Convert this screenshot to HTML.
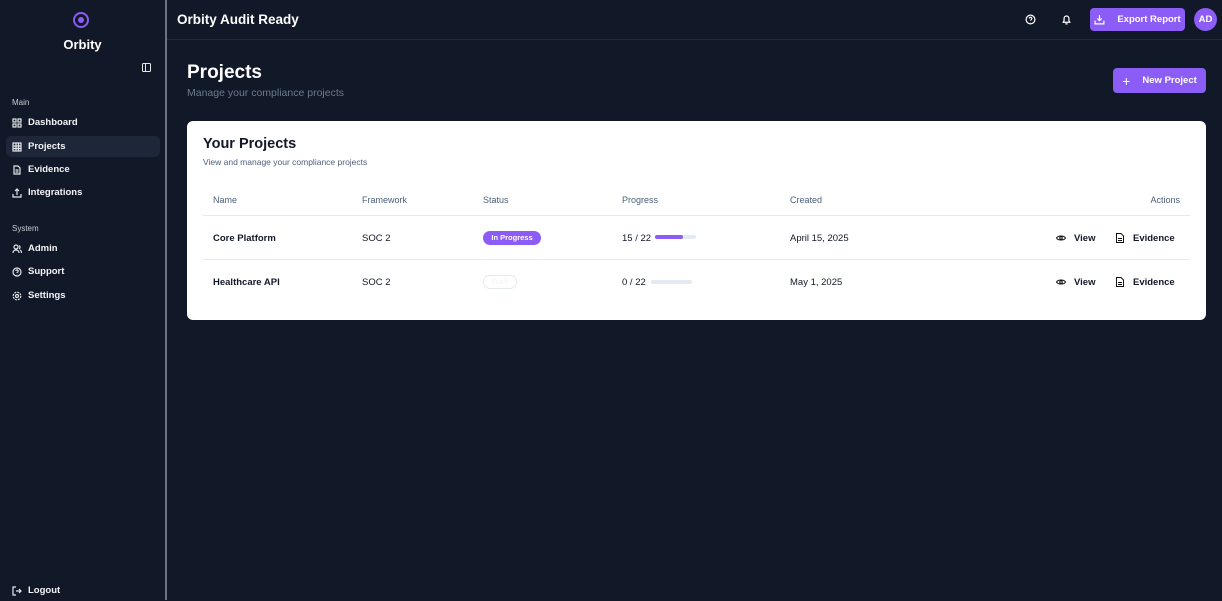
<!DOCTYPE html>
<html><head><meta charset="utf-8"><style>
*{box-sizing:border-box;margin:0;padding:0}
body{width:1222px;height:600px;background:#111827;font-family:"Liberation Sans",sans-serif;color:#fff;position:relative;overflow:hidden}
.side{position:absolute;left:0;top:0;width:167px;height:600px;background:#111827;border-right:2px solid #6b7280}
.logo{position:absolute;left:73px;top:12px;width:16px;height:16px;border:2px solid #8b5cf6;border-radius:50%}
.logo:after{content:"";position:absolute;left:3px;top:3px;width:6px;height:6px;background:#8b5cf6;border-radius:50%}
.brand{position:absolute;top:37px;width:165px;text-align:center;font-weight:bold;font-size:13px}
.sec{position:absolute;left:12px;font-size:8px;color:#c8ccd4}
.item{position:absolute;left:6px;width:154px;height:21px;border-radius:5px;display:flex;align-items:center;padding-left:6px;font-size:9.5px;font-weight:bold;color:#f3f4f6}
.item svg{width:10px;height:10px;margin-right:6px;fill:none;stroke:#e5e7eb;stroke-width:1.2}
.top{position:absolute;left:167px;top:0;right:0;height:40px;border-bottom:1px solid #1f2a37}
.title{position:absolute;left:177px;top:12px;font-size:13.5px;font-weight:bold}
.btn{position:absolute;background:#8b5cf6;border-radius:4px;color:#fff;font-size:9.5px;font-weight:bold;display:flex;align-items:center;justify-content:center}
.card{position:absolute;left:187px;top:121px;width:1019px;height:199px;background:#fff;border-radius:6px;color:#111827}
.th{position:absolute;top:74px;font-size:9px;color:#4b5f7a}
.td{position:absolute;font-size:9.5px;font-weight:bold;color:#111827;display:flex;align-items:center;height:12px}
.line{position:absolute;left:16px;right:16px;height:1px;background:#e5eaf0}
</style></head><body>
<div class="side">
<div class="logo"></div>
<div class="brand">Orbity</div>
<svg style="position:absolute;left:142px;top:63px" width="9" height="9" viewBox="0 0 9 9"><rect x=".5" y=".5" width="8" height="8" rx="1" fill="none" stroke="#e5e7eb"/><line x1="3.5" y1="1" x2="3.5" y2="8" stroke="#e5e7eb"/></svg>
<div class="sec" style="top:98px">Main</div>
<div class="item" style="top:112px"><svg viewBox="0 0 10 10"><rect x="1" y="1" width="3" height="3"/><rect x="6" y="1" width="3" height="3"/><rect x="1" y="6" width="3" height="3"/><rect x="6" y="6" width="3" height="3"/></svg>Dashboard</div>
<div class="item" style="top:136px;background:#1d2739"><svg viewBox="0 0 10 10"><rect x="1" y="1" width="8" height="8"/><path d="M1 4h8M1 6.5h8M4 1v8M6.5 1v8"/></svg>Projects</div>
<div class="item" style="top:159px"><svg viewBox="0 0 10 10"><path d="M2 1h4l2 2v6H2z M3.5 5h3M3.5 7h3"/></svg>Evidence</div>
<div class="item" style="top:182px"><svg viewBox="0 0 10 10"><path d="M1 6v3h8V6M5 7V1M3 3l2-2 2 2"/></svg>Integrations</div>
<div class="sec" style="top:224px">System</div>
<div class="item" style="top:238px"><svg viewBox="0 0 10 10"><circle cx="4" cy="3" r="2"/><path d="M1 9c0-2 1.5-3 3-3s3 1 3 3M7 1.5a2 2 0 010 3.5M8 6c1 .5 1.5 1.5 1.5 3"/></svg>Admin</div>
<div class="item" style="top:261px"><svg viewBox="0 0 10 10"><circle cx="5" cy="5" r="4"/><path d="M3.8 4a1.2 1.2 0 112 1c-.6.3-.8.6-.8 1M5 7.3v.2"/></svg>Support</div>
<div class="item" style="top:285px"><svg viewBox="0 0 10 10"><circle cx="5" cy="5" r="1.5"/><circle cx="5" cy="5" r="3.8" stroke-dasharray="2 1"/></svg>Settings</div>
<div class="item" style="top:580px"><svg viewBox="0 0 10 10"><path d="M4 1H1v8h3M4 5h5M7 3l2 2-2 2"/></svg>Logout</div>
</div>
<div class="top"></div>
<div class="title">Orbity Audit Ready</div>
<svg style="position:absolute;left:1025px;top:14px" width="11" height="11" viewBox="0 0 10 10" fill="none" stroke="#fff" stroke-width="1.1"><circle cx="5" cy="5" r="4"/><path d="M3.8 4a1.2 1.2 0 112 1c-.6.3-.8.6-.8 1M5 7.3v.2"/></svg>
<svg style="position:absolute;left:1061px;top:14px" width="11" height="11" viewBox="0 0 10 10" fill="none" stroke="#fff" stroke-width="1.1"><path d="M2 7.5h6L7.2 6V4a2.2 2.2 0 00-4.4 0v2zM4 9h2"/></svg>
<div class="btn" style="left:1090px;top:8px;width:95px;height:23px"><svg width="11" height="11" viewBox="0 0 10 10" fill="none" stroke="#fff" stroke-width="1.1" style="margin-right:12px"><path d="M1 6v3h8V6M5 1v5M3 4l2 2 2-2"/></svg>Export Report</div>
<div style="position:absolute;left:1194px;top:8px;width:23px;height:23px;border-radius:50%;background:#8b5cf6;font-size:9.5px;font-weight:bold;display:flex;align-items:center;justify-content:center">AD</div>
<div style="position:absolute;left:187px;top:62px;font-size:19px;font-weight:bold">Projects</div>
<div style="position:absolute;left:187px;top:87px;font-size:10.5px;color:#6b7a90">Manage your compliance projects</div>
<div class="btn" style="left:1113px;top:68px;width:93px;height:25px"><span style="font-size:14px;font-weight:normal;margin-right:12px">+</span>New Project</div>
<div class="card">
<div style="position:absolute;left:16px;top:15px;font-size:14.5px;font-weight:bold">Your Projects</div>
<div style="position:absolute;left:16px;top:36px;font-size:8.5px;color:#4b5f7a">View and manage your compliance projects</div>
<div class="th" style="left:26px">Name</div><div class="th" style="left:175px">Framework</div><div class="th" style="left:296px">Status</div><div class="th" style="left:435px">Progress</div><div class="th" style="left:603px">Created</div><div class="th" style="right:26px">Actions</div>
<div class="line" style="top:94px"></div>
<div class="line" style="top:138px"></div>
<div class="td" style="left:26px;top:111px">Core Platform</div><div class="td" style="left:175px;top:111px;font-weight:normal">SOC 2</div>
<div style="position:absolute;left:296px;top:110px;width:58px;height:14px;border-radius:7px;background:#8b5cf6;color:#fff;font-size:7.5px;font-weight:bold;text-align:center;line-height:14px">In Progress</div>
<div class="td" style="left:435px;top:111px;font-weight:normal">15 / 22</div>
<div style="position:absolute;left:468px;top:114px;width:41px;height:4px;border-radius:2px;background:#e5eaf0"><div style="width:28px;height:4px;border-radius:2px;background:#8b5cf6"></div></div>
<div class="td" style="left:603px;top:111px;font-weight:normal">April 15, 2025</div>
<div class="td" style="left:26px;top:155px">Healthcare API</div><div class="td" style="left:175px;top:155px;font-weight:normal">SOC 2</div>
<div style="position:absolute;left:296px;top:154px;width:34px;height:14px;border-radius:7px;border:1px solid #e5eaf0;color:#f3f4f6;font-size:7.5px;text-align:center;line-height:12px">Draft</div>
<div class="td" style="left:435px;top:155px;font-weight:normal">0 / 22</div>
<div style="position:absolute;left:464px;top:159px;width:41px;height:4px;border-radius:2px;background:#e5eaf0"></div>
<div class="td" style="left:603px;top:155px;font-weight:normal">May 1, 2025</div>
<div class="td" style="left:869px;top:111px"><svg width="10" height="8" viewBox="0 0 10 8" fill="none" stroke="#111" style="margin-right:8px"><path d="M.5 4C2 1.3 8 1.3 9.5 4 8 6.7 2 6.7.5 4z"/><circle cx="5" cy="4" r="1.3"/></svg>View</div>
<div class="td" style="left:929px;top:111px"><svg width="8" height="10" viewBox="0 0 8 10" fill="none" stroke="#111" style="margin-right:9px"><path d="M.5.5h4.5l2.5 2.5v6.5h-7zM2 5.5h4M2 7.5h4"/></svg>Evidence</div>
<div class="td" style="left:869px;top:155px"><svg width="10" height="8" viewBox="0 0 10 8" fill="none" stroke="#111" style="margin-right:8px"><path d="M.5 4C2 1.3 8 1.3 9.5 4 8 6.7 2 6.7.5 4z"/><circle cx="5" cy="4" r="1.3"/></svg>View</div>
<div class="td" style="left:929px;top:155px"><svg width="8" height="10" viewBox="0 0 8 10" fill="none" stroke="#111" style="margin-right:9px"><path d="M.5.5h4.5l2.5 2.5v6.5h-7zM2 5.5h4M2 7.5h4"/></svg>Evidence</div>
</div>
</body></html>
